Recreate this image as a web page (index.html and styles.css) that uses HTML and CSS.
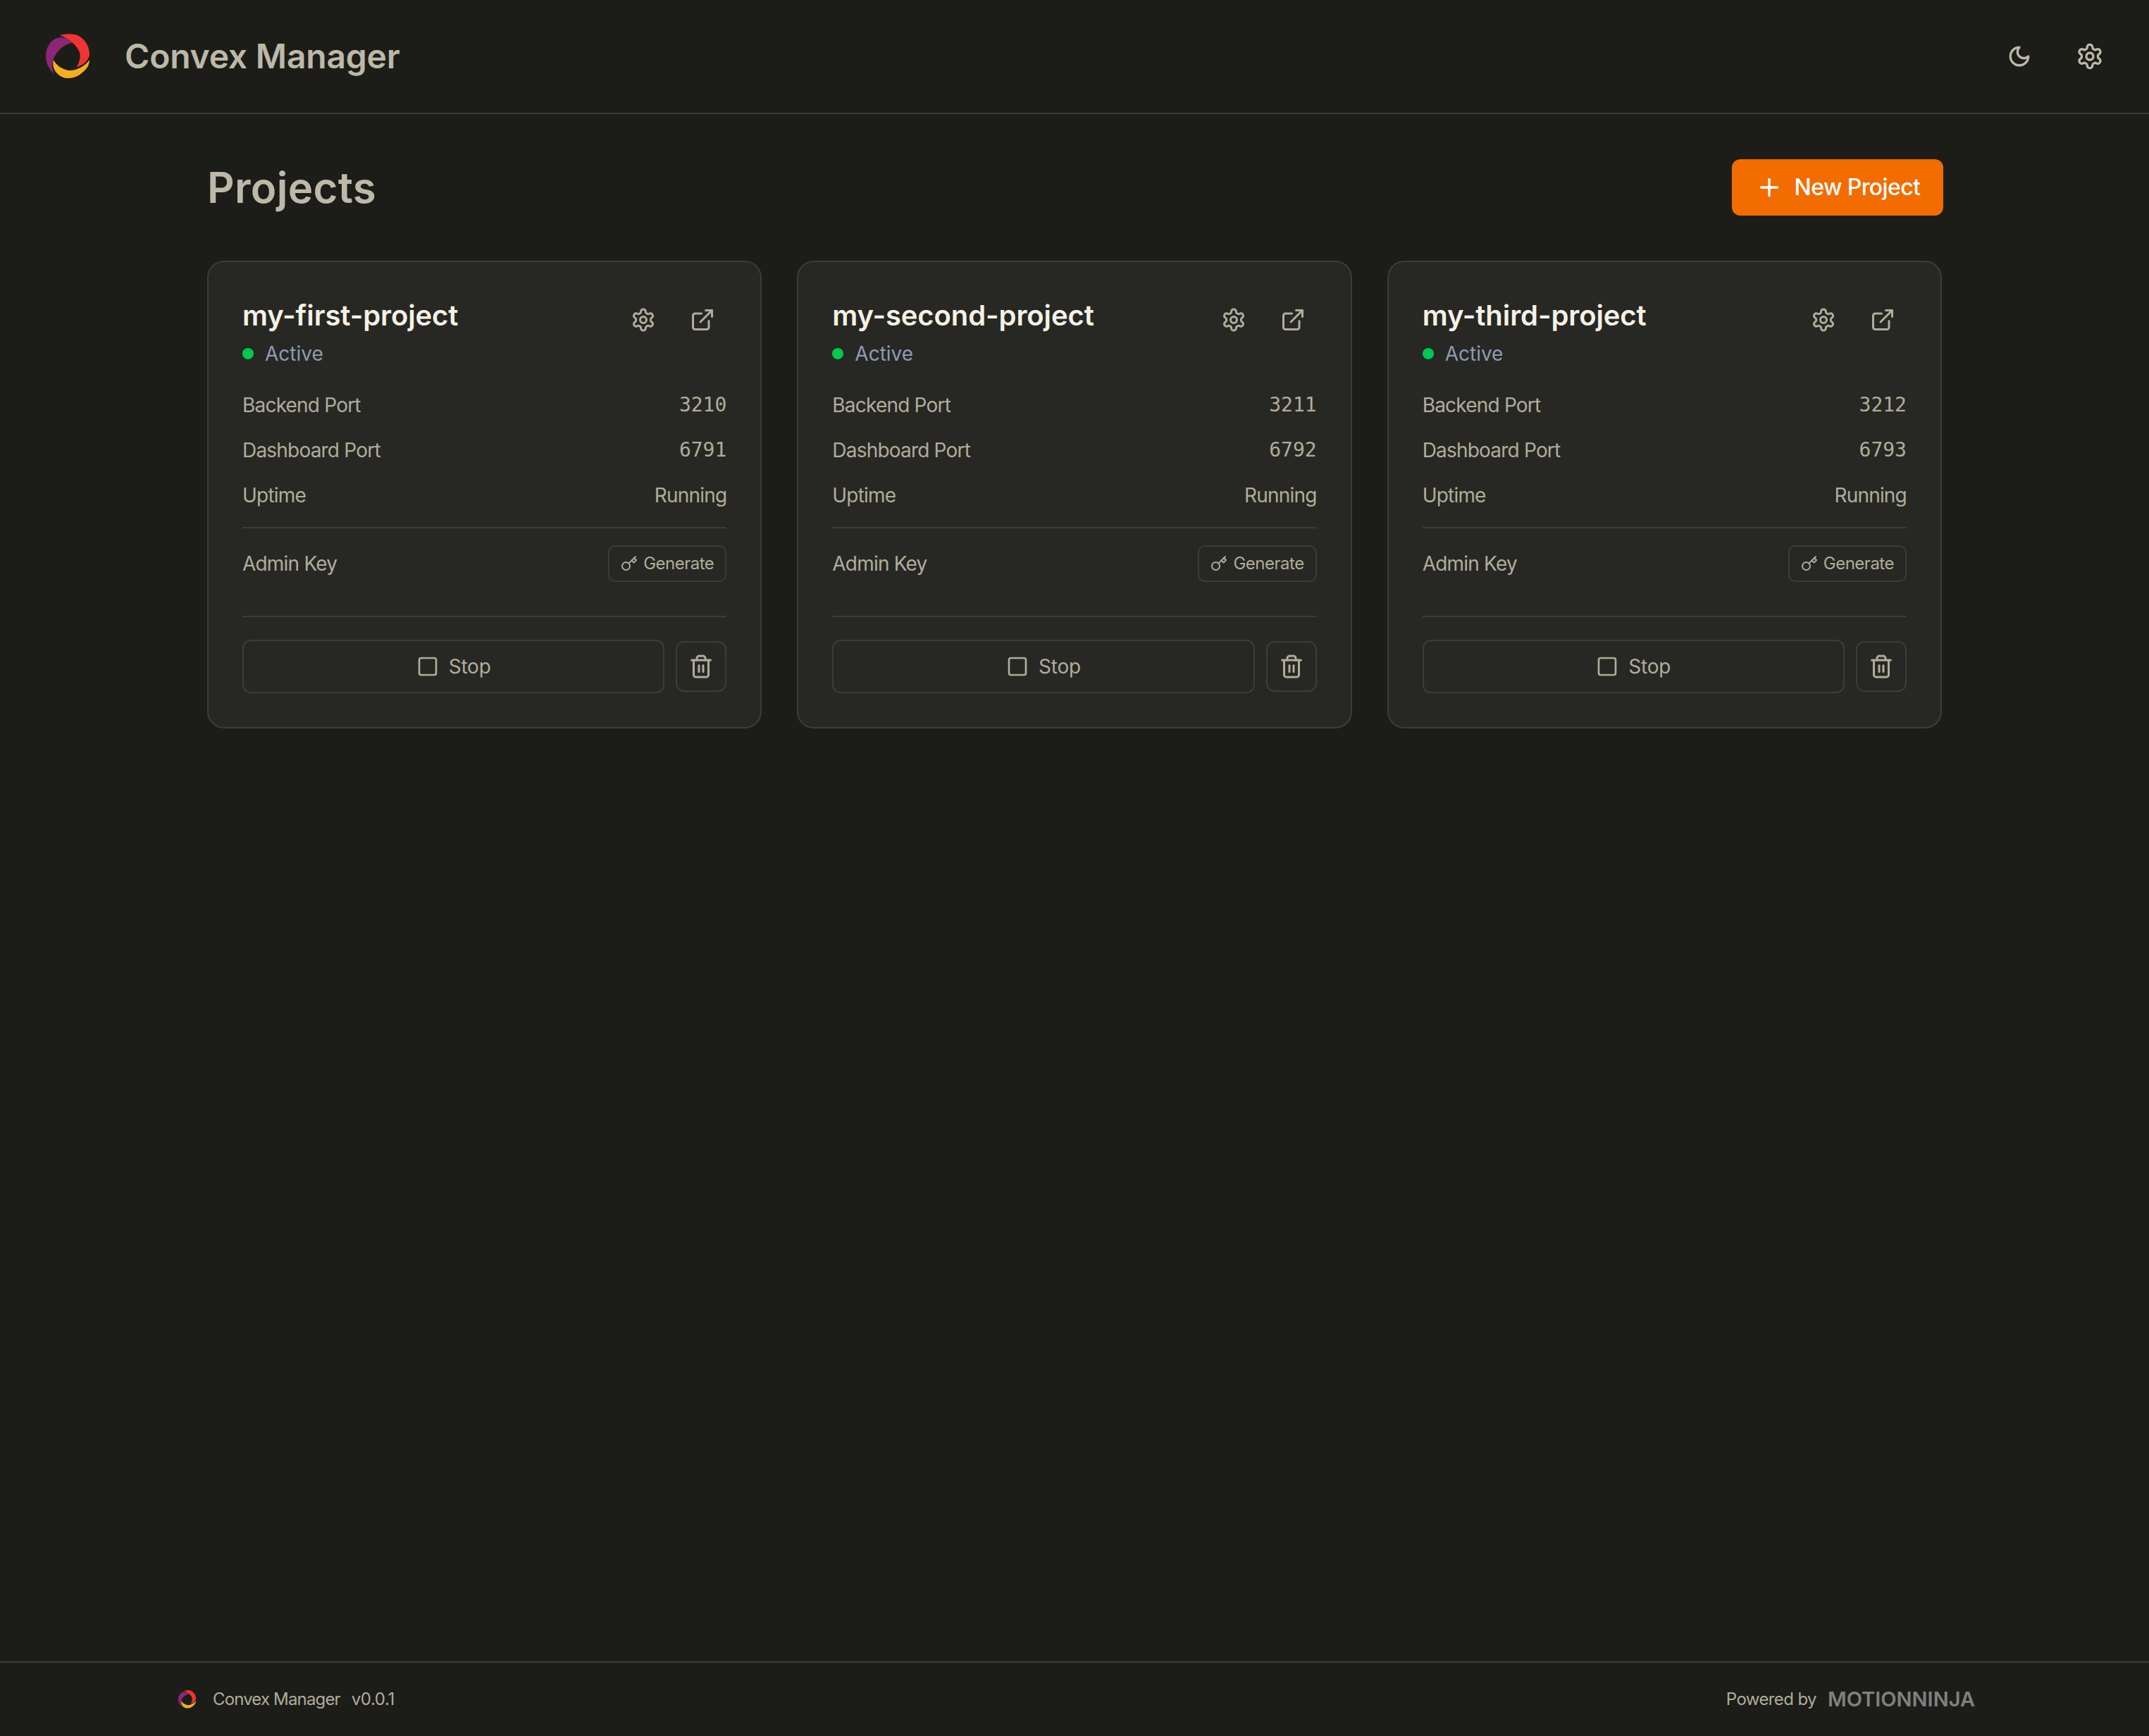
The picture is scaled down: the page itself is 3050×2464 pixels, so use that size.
FILE: index.html
```html
<!DOCTYPE html>
<html lang="en">
<head>
    <meta charset="UTF-8">
    <meta name="viewport" content="width=device-width, initial-scale=1.0">
    <title>Convex Manager</title>
    <link rel="stylesheet" href="styles.css">
</head>
<body>
    <!-- icon sprite -->
    <svg class="sprite" xmlns="http://www.w3.org/2000/svg">
        <symbol id="logo" viewBox="0 0 64 64">
            <path fill="#f23333" d="M20 2C27 0 35 -0.5 42 1C54 5 62 16 62 29C62 36 54 45 44 47C49 38 50 30 47 24C44 17 33 7 20 2Z"/>
            <path fill="#8d2676" d="M38 13C30 4 16 2 7 12C2 18 0 25 0 32C0 42 5 51 12 57C9 50 8 45 10 39C12 28 25 14 38 13Z"/>
            <path fill="#f3b01c" d="M11 37C14 43 20 49 32 52C42 53 56 46 62 37C62 44 58 50 53 54C47 60 39 63 32 63C26 63 21 61 17 57C11 52 9 44 11 37Z"/>
        </symbol>
        <symbol id="gear" viewBox="0 0 24 24">
            <path d="M12.22 2h-.44a2 2 0 0 0-2 2v.18a2 2 0 0 1-1 1.73l-.43.25a2 2 0 0 1-2 0l-.15-.08a2 2 0 0 0-2.73.73l-.22.38a2 2 0 0 0 .73 2.73l.15.1a2 2 0 0 1 1 1.72v.51a2 2 0 0 1-1 1.74l-.15.09a2 2 0 0 0-.73 2.73l.22.38a2 2 0 0 0 2.73.73l.15-.08a2 2 0 0 1 2 0l.43.25a2 2 0 0 1 1 1.73V20a2 2 0 0 0 2 2h.44a2 2 0 0 0 2-2v-.18a2 2 0 0 1 1-1.73l.43-.25a2 2 0 0 1 2 0l.15.08a2 2 0 0 0 2.73-.73l.22-.39a2 2 0 0 0-.73-2.73l-.15-.08a2 2 0 0 1-1-1.74v-.5a2 2 0 0 1 1-1.74l.15-.09a2 2 0 0 0 .73-2.73l-.22-.38a2 2 0 0 0-2.73-.73l-.15.08a2 2 0 0 1-2 0l-.43-.25a2 2 0 0 1-1-1.73V4a2 2 0 0 0-2-2z"/>
            <circle cx="12" cy="12" r="3"/>
        </symbol>
        <symbol id="moon" viewBox="0 0 24 24">
            <path d="M12 3a6 6 0 0 0 9 9 9 9 0 1 1-9-9Z"/>
        </symbol>
        <symbol id="plus" viewBox="0 0 24 24">
            <path d="M5 12h14"/><path d="M12 5v14"/>
        </symbol>
        <symbol id="external" viewBox="0 0 24 24">
            <path d="M15 3h6v6"/><path d="M10 14 21 3"/>
            <path d="M18 13v6a2 2 0 0 1-2 2H5a2 2 0 0 1-2-2V8a2 2 0 0 1 2-2h6"/>
        </symbol>
        <symbol id="key" viewBox="0 0 24 24">
            <circle cx="7.5" cy="15.5" r="5.5"/><path d="m21 2-9.6 9.6"/><path d="m15.5 7.5 3 3L22 7l-3-3"/>
        </symbol>
        <symbol id="square" viewBox="0 0 24 24">
            <rect x="3" y="3" width="18" height="18" rx="2"/>
        </symbol>
        <symbol id="trash" viewBox="0 0 24 24">
            <path d="M3 6h18"/><path d="M19 6v14c0 1-1 2-2 2H7c-1 0-2-1-2-2V6"/>
            <path d="M8 6V4c0-1 1-2 2-2h4c1 0 2 1 2 2v2"/><path d="M10 11v6"/><path d="M14 11v6"/>
        </symbol>
    </svg>

    <header class="topbar">
        <div class="brand">
            <svg class="brand-logo"><use href="#logo"/></svg>
            <span class="brand-name">Convex Manager</span>
        </div>
        <div class="topbar-actions">
            <button class="icon-btn"><svg class="icon icon-moon"><use href="#moon"/></svg></button>
            <button class="icon-btn"><svg class="icon icon-lg"><use href="#gear"/></svg></button>
        </div>
    </header>

    <main class="content">
        <div class="page-head">
            <h1>Projects</h1>
            <button class="new-btn"><svg class="icon icon-lg"><use href="#plus"/></svg>New Project</button>
        </div>

        <div class="project-grid">
            <section class="card">
                <div class="card-head">
                    <div>
                        <h2 class="project-name">my-first-project</h2>
                        <div class="status"><span class="status-dot"></span>Active</div>
                    </div>
                    <div class="card-actions">
                        <button class="card-icon"><svg class="icon icon-md"><use href="#gear"/></svg></button>
                        <button class="card-icon"><svg class="icon icon-md"><use href="#external"/></svg></button>
                    </div>
                </div>
                <div class="rows">
                    <div class="row"><span>Backend Port</span><span class="mono">3210</span></div>
                    <div class="row"><span>Dashboard Port</span><span class="mono">6791</span></div>
                    <div class="row"><span>Uptime</span><span>Running</span></div>
                </div>
                <div class="key-row">
                    <span>Admin Key</span>
                    <button class="generate-btn"><svg class="icon icon-sm"><use href="#key"/></svg>Generate</button>
                </div>
                <div class="card-foot">
                    <button class="stop-btn"><svg class="icon icon-stop"><use href="#square"/></svg>Stop</button>
                    <button class="trash-btn"><svg class="icon icon-md"><use href="#trash"/></svg></button>
                </div>
            </section>

            <section class="card">
                <div class="card-head">
                    <div>
                        <h2 class="project-name">my-second-project</h2>
                        <div class="status"><span class="status-dot"></span>Active</div>
                    </div>
                    <div class="card-actions">
                        <button class="card-icon"><svg class="icon icon-md"><use href="#gear"/></svg></button>
                        <button class="card-icon"><svg class="icon icon-md"><use href="#external"/></svg></button>
                    </div>
                </div>
                <div class="rows">
                    <div class="row"><span>Backend Port</span><span class="mono">3211</span></div>
                    <div class="row"><span>Dashboard Port</span><span class="mono">6792</span></div>
                    <div class="row"><span>Uptime</span><span>Running</span></div>
                </div>
                <div class="key-row">
                    <span>Admin Key</span>
                    <button class="generate-btn"><svg class="icon icon-sm"><use href="#key"/></svg>Generate</button>
                </div>
                <div class="card-foot">
                    <button class="stop-btn"><svg class="icon icon-stop"><use href="#square"/></svg>Stop</button>
                    <button class="trash-btn"><svg class="icon icon-md"><use href="#trash"/></svg></button>
                </div>
            </section>

            <section class="card">
                <div class="card-head">
                    <div>
                        <h2 class="project-name">my-third-project</h2>
                        <div class="status"><span class="status-dot"></span>Active</div>
                    </div>
                    <div class="card-actions">
                        <button class="card-icon"><svg class="icon icon-md"><use href="#gear"/></svg></button>
                        <button class="card-icon"><svg class="icon icon-md"><use href="#external"/></svg></button>
                    </div>
                </div>
                <div class="rows">
                    <div class="row"><span>Backend Port</span><span class="mono">3212</span></div>
                    <div class="row"><span>Dashboard Port</span><span class="mono">6793</span></div>
                    <div class="row"><span>Uptime</span><span>Running</span></div>
                </div>
                <div class="key-row">
                    <span>Admin Key</span>
                    <button class="generate-btn"><svg class="icon icon-sm"><use href="#key"/></svg>Generate</button>
                </div>
                <div class="card-foot">
                    <button class="stop-btn"><svg class="icon icon-stop"><use href="#square"/></svg>Stop</button>
                    <button class="trash-btn"><svg class="icon icon-md"><use href="#trash"/></svg></button>
                </div>
            </section>
        </div>
    </main>

    <footer class="footer">
        <div class="footer-inner">
            <div class="footer-brand">
                <svg class="footer-logo"><use href="#logo"/></svg>
                <span>Convex Manager</span>
                <span class="version">v0.0.1</span>
            </div>
            <div class="powered">
                <span>Powered by</span>
                <span class="wordmark">MOTIONNINJA</span>
            </div>
        </div>
    </footer>
</body>
</html>
```
FILE: styles.css
```css
* {
    box-sizing: border-box;
}

body {
    margin: 0;
    min-height: 100vh;
    display: flex;
    flex-direction: column;
    background-color: #1c1d19;
    color: #b1ac9c;
    font-family: Inter, 'Noto Sans', sans-serif;
    font-size: 28px;
    line-height: 40px;
}

button {
    font: inherit;
    color: inherit;
    background: none;
    border: none;
    cursor: pointer;
    padding: 0;
}

.sprite {
    display: none;
}

.icon {
    display: block;
    flex-shrink: 0;
    fill: none;
    stroke: currentColor;
    stroke-width: 2;
    stroke-linecap: round;
    stroke-linejoin: round;
}

.icon-lg {
    width: 40px;
    height: 40px;
}

.icon-moon {
    width: 40px;
    height: 40px;
    padding: 3px;
    stroke-width: 2.3;
}

.icon-md {
    width: 36px;
    height: 36px;
}

.icon-sm {
    width: 24px;
    height: 24px;
}

.icon-stop {
    width: 32px;
    height: 32px;
}

/* top bar */
.topbar {
    height: 162px;
    flex-shrink: 0;
    display: flex;
    align-items: center;
    justify-content: space-between;
    padding: 0 44px 0 65px;
    border-bottom: 2px solid #3c3d35;
}

.brand {
    display: flex;
    align-items: center;
    gap: 48px;
}

.brand-logo {
    width: 64px;
    height: 64px;
}

.brand-name {
    font-size: 48px;
    line-height: 64px;
    font-weight: 600;
    letter-spacing: -0.2px;
    color: #bdb8a8;
}

.topbar-actions {
    display: flex;
    gap: 20px;
}

.icon-btn {
    padding: 20px;
    color: #bdb8a8;
}

/* page */
.content {
    flex: 1;
    width: 2560px;
    margin: 0 auto;
    padding: 64px 47px 0 49px;
}

.page-head {
    display: flex;
    align-items: center;
    justify-content: space-between;
    margin-bottom: 64px;
}

h1 {
    margin: 0;
    font-size: 60px;
    line-height: 80px;
    font-weight: 600;
    letter-spacing: 0.3px;
    color: #bdb8a8;
}

.new-btn {
    height: 80px;
    width: 300px;
    display: flex;
    align-items: center;
    justify-content: center;
    gap: 16px;
    border-radius: 12px;
    background-color: #f26c00;
    color: #fff;
    font-size: 32px;
    font-weight: 500;
    letter-spacing: -0.6px;
}

.project-grid {
    display: grid;
    grid-template-columns: repeat(3, 1fr);
    gap: 50px;
    margin-right: 2px;
}

.card {
    padding: 48px;
    background-color: #272823;
    border: 2px solid #3c3d35;
    border-radius: 24px;
}

.card-head {
    display: flex;
    justify-content: space-between;
    align-items: flex-start;
}

.project-name {
    margin: 0 0 6px;
    font-size: 40px;
    line-height: 56px;
    font-weight: 600;
    letter-spacing: -0.1px;
    color: #f5f1e6;
}

.status {
    display: flex;
    align-items: center;
    gap: 16px;
    color: #8f9bb3;
}

.status-dot {
    width: 16px;
    height: 16px;
    border-radius: 50%;
    background-color: #00c950;
}

.card-actions {
    display: flex;
    gap: 16px;
}

.card-icon {
    padding: 16px;
    color: #b1ac9c;
}

.rows {
    display: flex;
    flex-direction: column;
    gap: 24px;
    margin-top: 33px;
    padding-bottom: 25px;
    border-bottom: 2px solid #3c3d35;
    letter-spacing: -0.8px;
}

.row,
.key-row {
    display: flex;
    justify-content: space-between;
    align-items: center;
}

.mono {
    font-family: 'DejaVu Sans Mono', monospace;
    letter-spacing: 0;
}

.key-row {
    padding: 24px 0 48px;
    border-bottom: 2px solid #3c3d35;
    letter-spacing: -0.8px;
}

.generate-btn {
    height: 52px;
    display: flex;
    align-items: center;
    gap: 8px;
    padding: 0 16px;
    font-size: 24px;
    letter-spacing: -0.5px;
    border: 2px solid #3c3d35;
    border-radius: 10px;
}

.card-foot {
    display: flex;
    align-items: center;
    gap: 16px;
    margin-top: 32px;
}

.stop-btn {
    flex: 1;
    height: 76px;
    display: flex;
    align-items: center;
    justify-content: center;
    gap: 14px;
    border: 2px solid #3c3d35;
    border-radius: 12px;
    letter-spacing: -0.2px;
}

.trash-btn {
    width: 72px;
    height: 72px;
    display: flex;
    align-items: center;
    justify-content: center;
    border: 2px solid #3c3d35;
    border-radius: 12px;
}

/* footer */
.footer {
    height: 106px;
    flex-shrink: 0;
    border-top: 2px solid #3c3d35;
}

.footer-inner {
    width: 2560px;
    height: 100%;
    margin: 0 auto;
    padding: 0 2px 0 8px;
    display: flex;
    align-items: center;
    justify-content: space-between;
    font-size: 24px;
    letter-spacing: -0.85px;
}

.footer-brand,
.powered {
    display: flex;
    align-items: center;
}

.footer-logo {
    width: 26px;
    height: 26px;
    margin-right: 23px;
}

.version {
    margin-left: 16px;
    letter-spacing: -0.4px;
}

.powered {
    letter-spacing: -0.6px;
}

.wordmark {
    margin-left: 16px;
    font-size: 29px;
    font-weight: 600;
    letter-spacing: 0;
    color: #808080;
}
```
